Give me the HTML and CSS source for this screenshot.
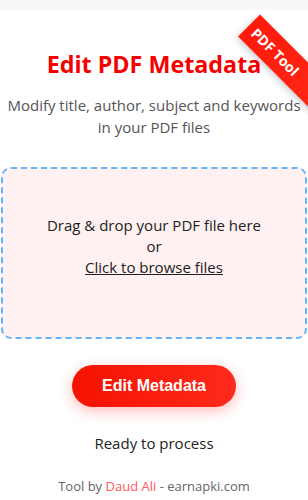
FILE: index.html
```html
<!DOCTYPE html>
<html lang="en">
<head>
<meta charset="utf-8">
<title>Edit PDF Metadata</title>
<link rel="stylesheet" href="styles.css">
</head>
<body>
<div class="card">
  <div class="ribbon">PDF Tool</div>
  <h1 class="title">Edit PDF Metadata</h1>
  <p class="subtitle">Modify title, author, subject and keywords in your PDF files</p>
  <div class="dropzone">
    <div class="drop-line">Drag &amp; drop your PDF file here</div>
    <div class="drop-line">or</div>
    <div class="drop-line"><span class="browse">Click to browse files</span></div>
  </div>
  <div class="actions">
    <button class="btn">Edit Metadata</button>
  </div>
  <div class="status">Ready to process</div>
  <div class="footer">Tool by <span class="author">Daud Ali</span> - earnapki.com</div>
</div>
</body>
</html>
```
FILE: styles.css
```css
html, body {
  margin: 0;
  padding: 0;
}
body {
  background: #f8f8f8;
  padding-top: 10px;
  font-family: "Open Sans", "Noto Sans", sans-serif;
  color: #333;
}
.card {
  position: relative;
  overflow: hidden;
  background: #fff;
  min-height: 490px;
  padding: 39px 1px 0;
  box-sizing: border-box;
  text-align: center;
}
.ribbon {
  position: absolute;
  top: 46px;
  right: -52px;
  width: 130px;
  height: 31px;
  line-height: 31px;
  padding-left: 7px;
  box-sizing: border-box;
  transform: rotate(45deg);
  background: linear-gradient(90deg, #ff1a0a, #ff2a1a);
  color: #fff;
  font-weight: 700;
  font-size: 14px;
  text-align: left;
  box-shadow: 0 3px 6px rgba(0,0,0,0.18);
}
.title {
  margin: 0;
  font-size: 23.3px;
  line-height: 30px;
  font-weight: 700;
  color: #f50000;
}
.subtitle {
  margin: 15px 0 0;
  font-size: 15px;
  line-height: 22px;
  color: #555;
}
.dropzone {
  margin-top: 29px;
  border: 2px dashed #64b5f6;
  border-radius: 10px;
  background: #fff1f1;
  padding: 46px 10px 59px;
  font-size: 15px;
  line-height: 21px;
  color: #222;
}
.browse {
  text-decoration: underline;
}
.actions {
  margin-top: 26px;
}
.btn {
  border: 0;
  border-radius: 21px;
  height: 42px;
  padding: 0 30px;
  background: linear-gradient(90deg, #f51200, #ff2a1c);
  color: #fff;
  font-family: "Liberation Sans", Arial, sans-serif;
  font-weight: 700;
  font-size: 16px;
  box-shadow: 0 4px 14px rgba(255, 30, 30, 0.3);
}
.status {
  margin-top: 25px;
  font-size: 15px;
  line-height: 22px;
  color: #222;
}
.footer {
  margin-top: 23px;
  font-size: 13px;
  line-height: 18px;
  color: #666;
}
.author {
  color: #ff5a5a;
}
```
